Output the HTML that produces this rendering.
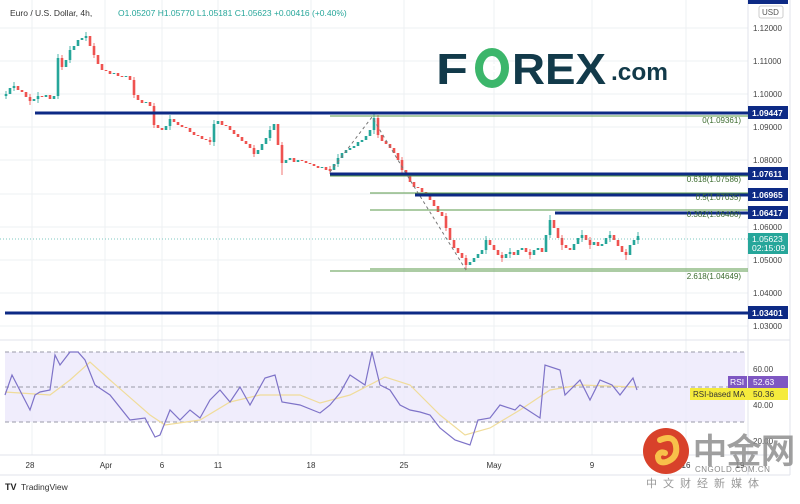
<!DOCTYPE html>
<html><head><meta charset="utf-8"><style>
body{margin:0;width:800px;height:499px;overflow:hidden;background:#fff;font-family:"Liberation Sans",sans-serif;}
svg text{font-family:"Liberation Sans",sans-serif;}
</style></head><body>
<svg width="800" height="499" xmlns="http://www.w3.org/2000/svg">
<rect x="0" y="0" width="800" height="499" fill="#fff"/>
<g stroke="#eef0f3" stroke-width="1">
<line x1="32" y1="0" x2="32" y2="455"/><line x1="105" y1="0" x2="105" y2="455"/><line x1="162" y1="0" x2="162" y2="455"/><line x1="218" y1="0" x2="218" y2="455"/><line x1="311" y1="0" x2="311" y2="455"/><line x1="404" y1="0" x2="404" y2="455"/><line x1="494" y1="0" x2="494" y2="455"/><line x1="592" y1="0" x2="592" y2="455"/><line x1="686" y1="0" x2="686" y2="455"/>
<line x1="0" y1="28" x2="748" y2="28"/><line x1="0" y1="61" x2="748" y2="61"/><line x1="0" y1="94" x2="748" y2="94"/><line x1="0" y1="127" x2="748" y2="127"/><line x1="0" y1="160" x2="748" y2="160"/><line x1="0" y1="194" x2="748" y2="194"/><line x1="0" y1="227" x2="748" y2="227"/><line x1="0" y1="260" x2="748" y2="260"/><line x1="0" y1="293" x2="748" y2="293"/><line x1="0" y1="326" x2="748" y2="326"/>
</g>
<line x1="0" y1="340" x2="790" y2="340" stroke="#e0e3eb"/>
<line x1="748" y1="0" x2="748" y2="475" stroke="#e0e3eb"/>
<line x1="0" y1="455" x2="790" y2="455" stroke="#e0e3eb"/>
<line x1="0" y1="475" x2="790" y2="475" stroke="#e0e3eb"/>
<line x1="790" y1="0" x2="790" y2="475" stroke="#e0e3eb"/>
<rect x="5" y="352" width="740" height="70" fill="#ece8fb" opacity="0.8"/>
<g stroke="#9a9aa8" stroke-dasharray="4,3" stroke-width="1"><line x1="5" y1="352" x2="745" y2="352"/><line x1="5" y1="387" x2="745" y2="387"/><line x1="5" y1="422" x2="745" y2="422"/></g>
<path stroke="#26a69a" stroke-width="2.6" fill="none" d="M6 96V94M10 94V88M14 88V86M34 101V99M38 99V96M46 97V95M54 99V96M58 96V58M66 67V60M70 60V50M74 50V46M78 46V40M82 40V38M86 38V36M114 74V73M126 77V76M146 103V102M166 130V126M170 126V119M214 142V124M218 124V121M258 154V150M262 150V144M266 144V138M270 138V130M274 130V124M286 163V160M290 160V158M298 162V160M322 168V167M334 170V164M338 164V158M342 158V153M346 153V150M350 150V148M354 148V146M358 146V142M362 142V140M366 140V136M370 136V130M374 130V118M470 265V262M474 262V258M478 258V254M482 254V250M486 250V240M506 258V254M510 254V252M518 255V250M522 250V248M534 255V250M538 250V248M546 252V235M550 235V220M574 250V244M578 244V238M582 238V235M594 245V242M602 246V244M606 244V238M610 238V235M630 255V245M634 245V240M638 240V236"/>
<path stroke="#26a69a" stroke-width="0.8" fill="none" d="M6 99V91M14 91V82M38 103V92M58 99V54M70 63V46M86 41V32M170 130V115M214 146V120M270 141V126M338 167V154M374 134V114M486 254V236M510 258V248M550 238V215M582 242V230M610 242V231M638 244V232"/>
<path stroke="#ef5350" stroke-width="2.6" fill="none" d="M18 86V90M22 90V92M26 92V97M30 97V101M42 96V97M50 95V99M62 58V67M90 36V46M94 46V55M98 55V64M102 64V70M106 70V71M110 71V74M118 73V76M122 76V77M130 76V80M134 80V95M138 95V100M142 100V103M150 102V106M154 106V125M158 125V128M162 128V130M174 119V122M178 122V125M182 125V127M186 127V128M190 128V132M194 132V135M198 135V136M202 136V139M206 139V140M210 140V142M222 121V125M226 125V126M230 126V130M234 130V134M238 134V137M242 137V141M246 141V144M250 144V148M254 148V154M278 124V145M282 145V163M294 158V162M302 160V161M306 161V163M310 163V164M314 164V166M318 166V168M326 167V170M330 169V171M378 118V135M382 135V141M386 141V144M390 144V148M394 148V153M398 153V160M402 160V170M406 170V176M410 176V182M414 182V187M418 187V188M422 188V192M426 192V195M430 195V200M434 200V206M438 206V212M442 212V216M446 216V228M450 228V240M454 240V248M458 248V253M462 253V258M466 258V265M490 240V245M494 245V250M498 250V255M502 255V258M514 252V255M526 248V252M530 252V255M542 248V252M554 220V228M558 228V238M562 238V245M566 245V248M570 248V250M586 235V240M590 240V245M598 242V246M614 235V240M618 240V246M622 246V252M626 252V255"/>
<path stroke="#ef5350" stroke-width="0.8" fill="none" d="M30 94V105M62 55V70M94 43V58M134 77V98M154 103V128M210 137V145M254 145V157M282 142V175M330 166V174M378 115V138M402 157V173M446 213V231M466 255V270M502 252V262M530 249V259M562 235V250M590 237V249M626 249V260"/>
<g stroke="#5a9a4a" stroke-width="1">
<line x1="330" y1="116" x2="748" y2="116"/><line x1="330" y1="176" x2="748" y2="176"/><line x1="370" y1="193" x2="748" y2="193"/><line x1="370" y1="210" x2="748" y2="210"/><line x1="370" y1="269" x2="748" y2="269"/><line x1="330" y1="271" x2="748" y2="271"/>
</g>
<polyline points="330,172 372,117 410,180 466,270" fill="none" stroke="#777" stroke-dasharray="3,3"/>
<line x1="0" y1="239" x2="748" y2="239" stroke="#26a69a" stroke-dasharray="1,2" opacity="0.6"/>
<g stroke="#0d2a85" stroke-width="3">
<line x1="35" y1="113" x2="748" y2="113"/><line x1="330" y1="174" x2="748" y2="174"/><line x1="415" y1="195" x2="748" y2="195"/><line x1="555" y1="213" x2="748" y2="213"/><line x1="5" y1="313" x2="748" y2="313"/>
</g>
<g font-size="8" fill="#3b6b2e" text-anchor="end">
<text x="741" y="123">0(1.09361)</text><text x="741" y="182">0.618(1.07586)</text><text x="741" y="200">0.5(1.07035)</text><text x="741" y="217">0.382(1.06486)</text><text x="741" y="279">2.618(1.04649)</text>
</g>
<polyline fill="none" stroke="#f0dc9a" stroke-width="1.2" points="5,392 20,393 50,395 70,380 90,362 110,380 150,415 165,425 200,420 230,402 260,395 300,395 320,403 350,395 385,377 410,385 440,415 465,435 490,428 520,410 550,390 580,385 637,387"/>
<polyline fill="none" stroke="#7e73c8" stroke-width="1.2" points="5,395 12,375 30,410 35,395 40,392 50,390 55,355 60,365 70,352 78,352 85,360 95,385 110,395 130,420 145,418 155,437 160,435 170,410 180,420 190,410 200,418 210,400 220,390 230,402 240,387 250,405 265,378 275,375 282,402 300,405 320,413 330,405 340,393 350,375 365,385 372,352 380,385 390,390 400,405 410,410 420,412 430,415 440,428 455,440 470,445 478,420 490,418 500,405 515,410 520,405 540,418 545,365 560,370 565,395 580,380 590,400 600,380 612,385 620,395 633,378 637,390"/>
<g font-size="8" fill="#444">
<text x="753" y="31">1.12000</text><text x="753" y="64">1.11000</text><text x="753" y="97">1.10000</text><text x="753" y="130">1.09000</text><text x="753" y="163">1.08000</text><text x="753" y="230">1.06000</text><text x="753" y="263">1.05000</text><text x="753" y="296">1.04000</text><text x="753" y="329">1.03000</text>
<text x="753" y="372">60.00</text><text x="753" y="408">40.00</text><text x="753" y="444">20.00</text>
</g>
<rect x="759" y="6" width="24" height="12" fill="#fff" stroke="#ccc" rx="2"/><text x="762" y="15" font-size="8" fill="#555">USD</text>
<rect x="748" y="0" width="40" height="4" fill="#0d2a85"/>
<g font-size="8.5" fill="#fff" font-weight="bold">
<rect x="748" y="106" width="40" height="13" fill="#0d2a85"/><text x="752" y="116">1.09447</text>
<rect x="748" y="167" width="40" height="13" fill="#0d2a85"/><text x="752" y="177">1.07611</text>
<rect x="748" y="188" width="40" height="13" fill="#0d2a85"/><text x="752" y="198">1.06965</text>
<rect x="748" y="206" width="40" height="13" fill="#0d2a85"/><text x="752" y="216">1.06417</text>
<rect x="748" y="306" width="40" height="13" fill="#0d2a85"/><text x="752" y="316">1.03401</text>
<rect x="748" y="233" width="40" height="21" fill="#26a69a"/><text x="752" y="242" font-weight="normal">1.05623</text><text x="752" y="251" font-weight="normal">02:15:09</text>
<rect x="728" y="376" width="19" height="12" fill="#7e57c2"/><text x="730" y="385" font-weight="normal">RSI</text>
<rect x="748" y="376" width="40" height="12" fill="#7e57c2"/><text x="753" y="385" font-weight="normal">52.63</text>
</g>
<rect x="690" y="388" width="58" height="12" fill="#f5eb3c"/><text x="693" y="397" font-size="8" fill="#333">RSI-based MA</text>
<rect x="748" y="388" width="40" height="12" fill="#f5eb3c"/><text x="753" y="397" font-size="8.5" fill="#333">50.36</text>
<g font-size="8" fill="#333" text-anchor="middle">
<text x="30" y="468">28</text><text x="106" y="468">Apr</text><text x="162" y="468">6</text><text x="218" y="468">11</text><text x="311" y="468">18</text><text x="404" y="468">25</text><text x="494" y="468">May</text><text x="592" y="468">9</text><text x="686" y="468">16</text><text x="740" y="468">19</text>
</g>
<text x="10" y="16" font-size="8.5" fill="#333">Euro / U.S. Dollar, 4h,</text>
<text x="118" y="16" font-size="8.5" fill="#26a69a">O1.05207  H1.05770  L1.05181  C1.05623  +0.00416 (+0.40%)</text>
<text x="5" y="490" font-size="9" font-weight="bold" fill="#222">TV</text>
<text x="21" y="490" font-size="8.5" fill="#333">TradingView</text>
<text x="436" y="84" font-size="44" font-weight="bold" fill="#123a4a" textLength="32" lengthAdjust="spacingAndGlyphs">F</text>
<ellipse cx="492" cy="68" rx="13" ry="16" fill="none" stroke="#3cb66b" stroke-width="8"/>
<line x1="484" y1="65" x2="500" y2="65" stroke="#fff" stroke-width="2"/><line x1="484" y1="71" x2="500" y2="71" stroke="#fff" stroke-width="2"/>
<text x="512" y="84" font-size="44" font-weight="bold" fill="#123a4a" textLength="94" lengthAdjust="spacingAndGlyphs">REX</text>
<text x="611" y="80" font-size="24" font-weight="bold" fill="#123a4a" textLength="57" lengthAdjust="spacingAndGlyphs">.com</text>
<circle cx="666" cy="451" r="23" fill="#d8412a"/>
<path d="M660 440 q14 -6 16 6 q2 12 -10 16 q-8 2 -8 -6 q2 -5 7 -3" fill="none" stroke="#f8c04a" stroke-width="6" stroke-linecap="round"/>
<text x="693" y="463" font-size="34" font-weight="bold" fill="#8f8f8f" opacity="0.85" font-family="Noto Sans CJK SC, sans-serif">中金网</text>
<text x="695" y="472" font-size="8" fill="#888" letter-spacing="0.5">CNGOLD.COM.CN</text>
<text x="646" y="487" font-size="11" fill="#999" letter-spacing="6" font-family="Noto Sans CJK SC, sans-serif">中文财经新媒体</text>
</svg>
</body></html>
